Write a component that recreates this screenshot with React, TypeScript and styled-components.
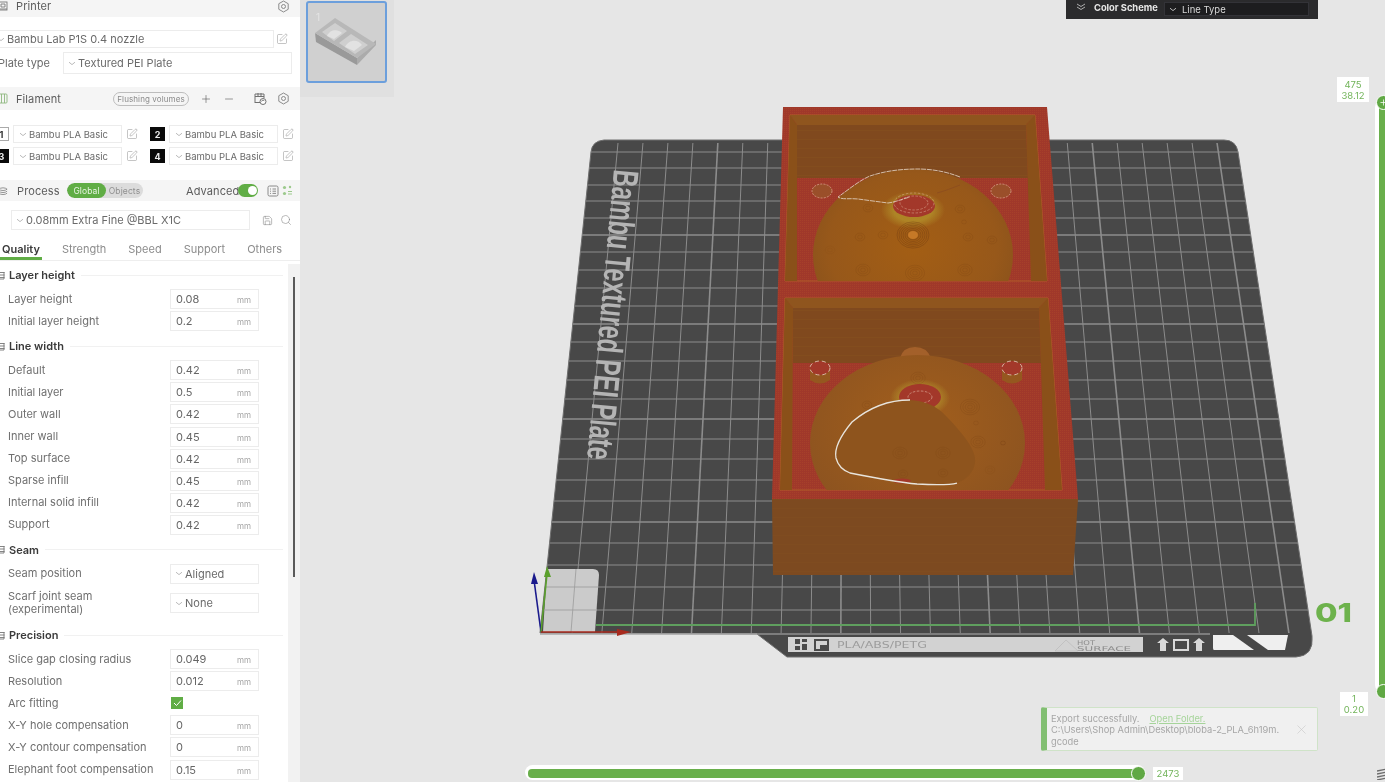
import React from "react";
import styled, { createGlobalStyle } from "styled-components";
import { Plus, Minus, SquarePen, Save, Search, X } from "lucide-react";

const Global = createGlobalStyle`
  html, body { margin: 0; padding: 0; background: #e6e6e6; overflow: hidden; }
  #root { width: 1385px; height: 782px; }
  * { box-sizing: border-box; }
`;

const Page = styled.div`
  width: 1385px; height: 782px; display: flex; overflow: hidden;
  font-family: Inter, "Noto Sans", "Liberation Sans", sans-serif;
  filter: blur(0.4px);
`;
const Sidebar = styled.aside`
  width: 300px; height: 782px; flex: none; background: #fff; display: flex; flex-direction: column; overflow: hidden;
`;
const PanelHeader = styled.div<{ $h: number; $pb?: number; $mt?: number }>`
  height: ${p => p.$h}px; padding-bottom: ${p => p.$pb ?? 0}px; margin-top: ${p => p.$mt ?? 0}px; flex: none; background: #f5f5f5;
  display: flex; align-items: center; padding-left: 0; padding-right: 10px;
  font-size: 11px; color: #5c5c5c; letter-spacing: 0.1px;
`;
const HeaderIcon = styled.span`
  width: 10px; margin-left: -2px; margin-right: 8px; display: inline-flex; flex: none; color: #777;
`;
const HeaderTitle = styled.span`
  flex: 1; white-space: nowrap;
`;
const ProcessTitle = styled.span`
  width: 51px; flex: none; white-space: nowrap; padding-left: 1px;
`;
const IconSlot = styled.span<{ $ml?: number; $c?: string }>`
  display: inline-flex; flex: none; margin-left: ${p => p.$ml ?? 0}px; color: ${p => p.$c ?? "#777"};
`;
const ComboBox = styled.div<{ $h: number; $w?: number; $fs?: number; $pl?: number }>`
  height: ${p => p.$h}px; ${p => (p.$w ? `width:${p.$w}px;` : "flex:1; min-width:0;")}
  border: 1px solid #ececec; background: #fff; display: flex; align-items: center;
  padding-left: ${p => p.$pl ?? 4}px; gap: 2px;
  font-size: ${p => p.$fs ?? 11}px; color: #6a6a6a; white-space: nowrap; overflow: hidden;
`;
const PrinterRow = styled.div`
  display: flex; align-items: center; margin: 13px 0 0 -6px; padding-right: 12px; height: 18px; gap: 2px;
`;
const PlateRow = styled.div`
  display: flex; align-items: center; height: 22px; margin: 4px 8px 0 -2px;
`;
const PlateLabel = styled.span`
  width: 65px; flex: none; font-size: 11px; color: #6a6a6a;
`;
const FilamentGrid = styled.div`
  display: grid; grid-template-columns: 144px 144px; column-gap: 12px; row-gap: 4px; margin: 15px 0 15px -6px;
`;
const FilamentCell = styled.div`
  display: flex; align-items: center; height: 18px;
`;
const Badge = styled.span<{ $dark?: boolean }>`
  width: 15px; height: 14px; flex: none; margin-right: 4px; display: flex; align-items: center; justify-content: center;
  font-size: 9px; font-weight: 700;
  background: ${p => (p.$dark ? "#0a0a0a" : "#fff")}; color: ${p => (p.$dark ? "#eee" : "#333")};
  border: 1px solid ${p => (p.$dark ? "#0a0a0a" : "#aaa")};
`;
const FlushPill = styled.span`
  width: 76px; height: 14px; margin-left: auto; border: 1px solid #bdbdbd; border-radius: 7px; display: flex;
  align-items: center; justify-content: center; font-size: 8px; color: #8a8a8a; white-space: nowrap;
`;
const Segmented = styled.div`
  width: 76px; height: 15px; background: #dcdcdc; border-radius: 8px; display: flex; flex: none;
  font-size: 8.5px; overflow: hidden;
`;
const SegmentOn = styled.span`
  width: 39px; background: #60ad45; color: #e9f4e4; border-radius: 8px; display: flex; align-items: center; justify-content: center;
`;
const SegmentOff = styled.span`
  flex: 1; color: #909090; display: flex; align-items: center; justify-content: center;
`;
const Advanced = styled.span`
  margin-left: 43px; width: 52px; flex: none; font-size: 11px; color: #5c5c5c; white-space: nowrap;
`;
const Switch = styled.span`
  width: 20px; height: 13px; border-radius: 7px; background: #60ad45; display: flex; justify-content: flex-end;
  align-items: center; padding-right: 1px; flex: none;
  &::after { content: ""; width: 9px; height: 9px; border-radius: 50%; background: #fff; }
`;
const PresetRow = styled.div`
  display: flex; align-items: center; height: 20px; margin: 9px 8px 0 11px; 
`;
const Tabs = styled.nav`
  height: 21px; margin-top: 10px; padding-left: 2px; display: flex; gap: 22px; flex: none; border-bottom: 1px solid #eeeeee;
  font-size: 11px; color: #8c8c8c; position: relative;
`;
const Tab = styled.span<{ $on?: boolean }>`
  line-height: 18px; white-space: nowrap; position: relative;
  ${p => p.$on ? `color:#3a3a3a;font-weight:600;&::after{content:"";position:absolute;left:-2px;right:-2px;top:17px;height:3px;background:#60ad45;}` : ""}
`;
const FormWrap = styled.div`
  flex: 1; display: flex; min-height: 0;
`;
const Form = styled.div`
  width: 288px; flex: none; padding-right: 5px;
`;
const Track = styled.div`
  flex: 1; background: #f2f2f2; margin-top: 3px; padding: 13px 0 0 5px;
`;
const Thumb = styled.div`
  width: 1.5px; height: 300px; background: #5a5a5a;
`;
const Section = styled.div`
  height: 26px; margin-top: 1px; display: flex; align-items: center; font-size: 11px; font-weight: 600; color: #3a3a3a;
  &::after { content: ""; flex: 1; height: 1px; background: #f1f1f1; margin-left: 6px; }
`;
const SectionIcon = styled.span`
  width: 8px; margin-left: -3px; margin-right: 4px; display: inline-flex; flex: none; color: #777;
`;
const Row = styled.div<{ $tall?: boolean }>`
  height: ${p => (p.$tall ? 36 : 22.1)}px; display: flex; align-items: center; padding-left: 8px;
`;
const Label = styled.span`
  width: 162px; flex: none; font-size: 11px; line-height: 13px; color: #6f6f6f;
`;
const Field = styled.span`
  width: 89px; height: 20px; border: 1px solid #ececec; display: flex; align-items: center; padding: 0 7px 0 5px;
  font-size: 11px; color: #666;
`;
const Unit = styled.span`
  margin-left: auto; font-size: 8px; color: #a5a5a5; padding-top: 2px;
`;
const Check = styled.span`
  width: 12px; height: 12px; background: #60ad45; display: flex; align-items: center; justify-content: center; margin-left: 1px;
`;

const Viewport = styled.main`
  flex: 1; position: relative; background: #e6e6e6; overflow: hidden;
`;
const Scene = styled.svg`
  position: absolute; left: 0; top: 0; width: 1085px; height: 782px;
`;
const ThumbDock = styled.div`
  position: absolute; left: 0; top: 0; width: 94px; height: 97px; background: #e0e0e0; padding: 1px 0 0 6px;
`;
const ThumbCard = styled.div`
  width: 81px; height: 82px; background: #d0d0d0; border: 2px solid #6c9fdc; border-radius: 3px; overflow: hidden;
`;
const SchemeBar = styled.div`
  position: absolute; left: 766px; top: 0; width: 252px; height: 19px; background: #2b2b2d; display: flex; align-items: flex-start;
  padding: 2px 9px 0 10px; font-size: 9.3px; color: #e8e8e8;
`;
const SchemeTitle = styled.span`
  font-weight: 700; margin-left: 8px; width: 70px; line-height: 11px; white-space: nowrap;
`;
const SchemeSelect = styled.span`
  flex: 1; height: 14px; background: #1d1d1f; border: 1px solid #333338; display: flex; align-items: center; gap: 5px; padding-left: 4px;
  color: #d8d8d8; font-size: 9.5px;
`;
const VBar = styled.div`
  position: absolute; left: 1075px; top: 100px; width: 14px; height: 592px; background: #fff; border-radius: 7px; padding: 4px 0 4px 4px;
`;
const VBarFill = styled.div`
  width: 10px; height: 100%; background: #69af4b;
`;
const Knob = styled.span<{ $x: number; $y: number }>`
  position: absolute; left: ${p => p.$x}px; top: ${p => p.$y}px; width: 15px; height: 15px; border-radius: 50%;
  background: #60a844; border: 1px solid #fff; color: #fff; display: flex; align-items: center; justify-content: center;
`;
const ValueTag = styled.div<{ $x: number; $y: number; $w: number; $h: number }>`
  position: absolute; left: ${p => p.$x}px; top: ${p => p.$y}px; width: ${p => p.$w}px; height: ${p => p.$h}px;
  background: #fff; color: #72b45a; font-size: 9.5px; line-height: 11px; text-align: center; display: flex; flex-direction: column; justify-content: center;
`;
const HBar = styled.div`
  position: absolute; left: 225px; top: 765px; width: 620px; height: 15px; background: #fff; border-radius: 8px; padding: 4px 6px 2px 3px;
`;
const HBarFill = styled.div`
  height: 9px; background: #69af4b; border-radius: 4px;
`;
const Toast = styled.div`
  position: absolute; left: 741px; top: 707px; width: 277px; height: 44px; background: #f0f0f0; border: 1px solid #cfe3c8; border-left: 6px solid #82bf72;
  border-radius: 2px; padding: 5px 0 0 4px; font-size: 9.3px; line-height: 11.3px; color: #a6a6a6;
`;
const ToastLine = styled.div`
  white-space: nowrap;
`;
const ToastLink = styled.span`
  color: #a6d49a; text-decoration: underline; margin-left: 10px;
`;
const ToastClose = styled.span`
  position: absolute; right: 8px; top: 14px; display: flex; color: #c8c8c8;
`;
const CornerIcon = styled.span`
  position: absolute; left: 1077px; top: 768px; display: flex; color: #6d6d6d;
`;

const Chevron = ({ c = "#a8a8a8" }: { c?: string }) => (
  <svg width="8" height="5" viewBox="0 0 8 5" fill="none" style={{ flex: "none" }}><path d="M1 1.2 L4 3.6 L7 1.2" stroke={c} strokeWidth="0.8" /></svg>
);
const Gear = () => (
  <svg width="13" height="13" viewBox="0 0 13 13" fill="none" stroke="#808080" strokeWidth="0.9"><path d="M6.5 1 L11.2 3.7 V9.3 L6.5 12 L1.8 9.3 V3.7 Z" strokeLinejoin="round" /><circle cx="6.5" cy="6.5" r="2" /></svg>
);
const Edit = () => <SquarePen size={12} strokeWidth={1} color="#8a8a8a" />;
const PrinterIco = () => (
  <svg width="10" height="10" viewBox="0 0 10 10" fill="none" stroke="#7a7a7a" strokeWidth="0.9"><rect x="1" y="1" width="8" height="8" /><path d="M3 3h4v3H3z M1 8h8" /></svg>
);
const SpoolIco = () => (
  <svg width="10" height="11" viewBox="0 0 10 11" fill="none" stroke="#8fb87f" strokeWidth="0.9"><rect x="1" y="1" width="8" height="9" rx="1" /><path d="M3.5 1v9 M6.5 1v9" /></svg>
);
const LayersIco = () => (
  <svg width="11" height="10" viewBox="0 0 11 10" fill="none" stroke="#808080" strokeWidth="0.9"><path d="M1 3c2-2 7-2 9 0c-2 2-7 2-9 0z M1 5.2c2 2 7 2 9 0 M1 7.4c2 2 7 2 9 0" /></svg>
);
const SyncIco = () => (
  <svg width="14" height="13" viewBox="0 0 14 13" fill="none" stroke="#707070" strokeWidth="1"><path d="M2 11V2h9v4 M2 4.5h9 M5 1v3 M8 1v3 M2 10.5h5" /><circle cx="10" cy="9.5" r="3" fill="#fff" /><path d="M8.6 9.5a1.4 1.4 0 0 1 2.7-.4" /></svg>
);
const SecIco = () => (
  <svg width="8" height="9" viewBox="0 0 8 9" fill="none" stroke="#777" strokeWidth="0.9"><path d="M0.5 1.5h7 M0.5 4h7 M0.5 6.5h7 M1 1v7h6V1" /></svg>
);

const Combo = ({ text, h = 18, w, pl, fs }: { text: string; h?: number; w?: number; pl?: number; fs?: number }) => (
  <ComboBox $h={h} $w={w} $pl={pl} $fs={fs}><Chevron />{text}</ComboBox>
);
const Num = ({ label, v }: { label: string; v: string }) => (
  <Row><Label>{label}</Label><Field>{v}<Unit>mm</Unit></Field></Row>
);
const Sec = ({ t }: { t: string }) => <Section><SectionIcon><SecIco /></SectionIcon>{t}</Section>;
const Fil = ({ n, dark }: { n: number; dark?: boolean }) => (
  <FilamentCell>
    <Badge $dark={dark}>{n}</Badge>
    <Combo text="Bambu PLA Basic" fs={9.5} pl={5} />
    <IconSlot $ml={4}><Edit /></IconSlot>
  </FilamentCell>
);

const hYs = [152,168,185,201,218,235,252,270,288,306,324,342,361,380,399,419,439,459,480,501,522,543,565,587,610];

const Rings = ({ cx, cy, r, c = "#6e3a10", op = 0.34, gap = 2.4, dot }: { cx: number; cy: number; r: number; c?: string; op?: number; gap?: number; dot?: boolean }) => {
  const list: number[] = [];
  for (let i = gap; i <= r; i += gap) list.push(i);
  return (
    <g fill="none" stroke={c} strokeWidth="0.5" opacity={op}>
      {list.map(q => <ellipse key={q} cx={cx} cy={cy} rx={q} ry={q * 0.82} />)}
      {dot && <ellipse cx={cx} cy={cy} rx={5} ry={4} fill="#d2832e" stroke="none" />}
    </g>
  );
};

const WallPattern = ({ id, base, line }: { id: string; base: string; line: string }) => (
  <pattern id={id} width="6" height="9" patternUnits="userSpaceOnUse">
    <rect width="6" height="9" fill={base} />
    <path d="M0 4.5H6" stroke={line} strokeWidth="0.6" />
  </pattern>
);

const Scene3D = () => (
  <Scene viewBox="300 0 1085 782">
    <defs>
      <clipPath id="bedClip"><path d="M540 633 L591 152 Q592 141 604 140 L1224 140 Q1236 140 1238 152 L1312 636 L1312 634 L540 634 Z" /></clipPath>
      <clipPath id="c1"><rect x="786" y="120" width="260" height="161" /></clipPath>
      <clipPath id="c2"><rect x="782" y="300" width="280" height="190" /></clipPath>
      <clipPath id="blob2"><path d="M942 412 C930 402 915 399 900 400 C880 402 862 410 852 422 C842 434 834 448 836 458 C838 466 842 470 850 473 C870 477 895 482 917 484 C935 485 950 485 957 483 C970 478 976 468 975 458 C973 445 958 428 942 412Z" /></clipPath>
      <radialGradient id="sph1" cx="0.5" cy="0.45" r="0.6">
        <stop offset="0" stopColor="#a35e14" /><stop offset="0.7" stopColor="#97581a" /><stop offset="1" stopColor="#87511c" />
      </radialGradient>
      <radialGradient id="sph2" cx="0.5" cy="0.4" r="0.6">
        <stop offset="0" stopColor="#a35f1c" /><stop offset="1" stopColor="#8c5320" />
      </radialGradient>
      <radialGradient id="glow"><stop offset="0.6" stopColor="#b9a030" /><stop offset="1" stopColor="#b9a030" stopOpacity="0" /></radialGradient>
      <pattern id="red" width="2" height="2" patternUnits="userSpaceOnUse">
        <rect width="2" height="2" fill="#a0382a" /><rect width="1" height="1" fill="#a6402a" />
      </pattern>
      <WallPattern id="front" base="#7d4a20" line="#814d20" />
      <WallPattern id="back" base="#80491e" line="#84501f" />
    </defs>

    <path d="M540 633 L591 152 Q592 141 604 140 L1224 140 Q1236 140 1238 152 L1312 636 Q1314 656 1296 657 L787 657 L757 634 Z" fill="#484848" stroke="#6e6e6e" strokeWidth="1" />
    <g clipPath="url(#bedClip)" stroke="#8c8c8c">
      {hYs.map((y, i) => <line key={y} x1="530" x2="1320" y1={y} y2={y} strokeWidth={i % 5 === 0 && i > 0 ? 1.6 : 1} />)}
      {Array.from({ length: 25 }).map((_, k) => (
        <line key={k} x1={618 + 24.96 * k} y1="143" x2={572 + 29.87 * k} y2="633" strokeWidth={k % 5 === 4 ? 1.6 : 1} />
      ))}
    </g>
    <line x1="540" y1="634" x2="757" y2="634" stroke="#a8a8a8" strokeWidth="1.5" />
    <line x1="757" y1="634" x2="1210" y2="634" stroke="#8f8f8f" strokeWidth="1.5" />

    <text transform="translate(614 169) rotate(95.3)" fontFamily="'Liberation Sans', sans-serif" fontWeight="700" fontSize="36" fill="#b4b4b4" textLength="291" lengthAdjust="spacingAndGlyphs">Bambu Textured PEI Plate</text>

    <path d="M547 569 H593 Q599 569 599 575 L595 632 H543 Z" fill="#cbcbcb" />
    <g stroke="#9a9a9a" strokeWidth="0.8"><path d="M546 587 H598 M544 610 H596 M576 569 L571 632" /></g>

    <path d="M596 625 H1255 V603" fill="none" stroke="#5f9f5e" strokeWidth="1.8" />

    <path d="M541 632 L534 580" stroke="#1a1a8c" strokeWidth="1.6" fill="none" />
    <path d="M534 572 L538 584 L531 584 Z" fill="#1a1a8c" />
    <path d="M541 632 L547 574" stroke="#5aa02c" strokeWidth="1.6" fill="none" />
    <path d="M547 566 L551 577 L544 577 Z" fill="#5aa02c" />
    <path d="M541 632 H620" stroke="#a82a1e" strokeWidth="1.6" fill="none" />
    <path d="M631 632 L617 636 L617 629 Z" fill="#a82a1e" />

    {/* bed labels */}
    <rect x="788" y="637" width="355" height="15" fill="#d2d2d2" />
    <g fill="#4a4a4a">
      <path d="M795 639h5v5h-5z M802 639h5v3h-5z M795 646h5v4h-5z M802 644h5v6h-5z" />
      <path d="M814 639h15v12h-15z M816 641v8h4v-4h7v-4z" fillRule="evenodd" />
    </g>
    <text x="837" y="648" fontFamily="'DejaVu Sans', sans-serif" fontSize="9.5" fill="#9c9c9c" textLength="90" lengthAdjust="spacingAndGlyphs">PLA/ABS/PETG</text>
    <path d="M1055 651 L1066 640 L1078 651 Z" fill="none" stroke="#bcbcbc" strokeWidth="0.8" />
    <text x="1077" y="645" fontFamily="'DejaVu Sans', sans-serif" fontSize="6.5" fill="#8e8e8e" textLength="18" lengthAdjust="spacingAndGlyphs">HOT</text>
    <text x="1077" y="651" fontFamily="'DejaVu Sans', sans-serif" fontSize="6.5" fill="#8e8e8e" textLength="54" lengthAdjust="spacingAndGlyphs">SURFACE</text>
    <g fill="#d8d8d8">
      <path d="M1163 638 L1169 643 H1166 V651 H1160 V643 H1157 Z" />
      <path d="M1173 639 H1189 V651 H1173 Z M1175 641 V649 H1187 V641 Z" fillRule="evenodd" />
      <path d="M1199 638 L1205 643 H1202 V651 H1196 V643 H1193 Z" />
      <path d="M1213 635 H1233 L1254 650 H1214 Q1213 650 1213 648 Z" fill="#efefef" />
      <path d="M1247 635 H1288 L1285 650 H1268 Z" fill="#efefef" />
    </g>
    <text x="1315" y="622" fontFamily="Inter, 'Liberation Sans', sans-serif" fontWeight="800" fontSize="26" fill="#6db24c" textLength="37" lengthAdjust="spacingAndGlyphs">01</text>

    {/* printed box */}
    <path d="M783 107 H1047 L1078 499 H772 Z" fill="url(#red)" />
    <path d="M772 499 H1078 L1073 575 H773 Z" fill="url(#front)" />

    {/* cavity 1 */}
    <path d="M790 115 H1035 L1047 281 H785 Z" fill="url(#red)" stroke="#b5662a" strokeWidth="0.8" />
    <path d="M797 125 H1026 L1028 178 H797 Z" fill="url(#back)" />
    <path d="M790 115 H1035 L1026 125 H797 Z" fill="#8f551e" />
    <path d="M790 115 L785 281 H797 L797 125 Z" fill="#8a5019" />
    <path d="M1035 115 L1047 281 H1031 L1026 125 Z" fill="#8a5019" />
    <g fill="none" stroke="#d9a28c" strokeWidth="0.8" strokeDasharray="2 1.2">
      <ellipse cx="822" cy="191" rx="10" ry="7" fill="#9a4f2a" />
      <ellipse cx="1001" cy="191" rx="10" ry="7" fill="#9a4f2a" />
    </g>
    <g clipPath="url(#c1)">
      <ellipse cx="913" cy="255" rx="100" ry="86" fill="url(#sph1)" />
      <ellipse cx="913" cy="210" rx="32" ry="19" fill="url(#glow)" opacity="0.6" />
      <Rings cx={913} cy={235} r={16} op={0.75} gap={2} dot />
      <Rings cx={883} cy={235} r={7} />
      <Rings cx={860} cy={237} r={7} />
      <Rings cx={968} cy={237} r={7} />
      <Rings cx={960} cy={209} r={7} />
      <Rings cx={868} cy={208} r={7} />
      <Rings cx={863} cy={270} r={9} />
      <Rings cx={915} cy={273} r={10} />
      <Rings cx={965} cy={270} r={9} />
      <Rings cx={964} cy={222} r={4} />
      <Rings cx={992} cy={240} r={5} />
      <Rings cx={830} cy={250} r={5} op={0.15} />
      <ellipse cx="914" cy="206" rx="21" ry="11" fill="#a3382a" />
      <g fill="none" stroke="#e2b9a0" strokeWidth="0.6" strokeDasharray="2.5 1.5" opacity="0.8">
        <ellipse cx="914" cy="203" rx="14" ry="7" />
        <ellipse cx="914" cy="203" rx="20" ry="10" />
      </g>
    </g>
    <path d="M960 177 C945 171 930 169 918 169 C900 169 885 171 870 176 C860 180 848 190 838 197 C842 200 850 198 858 199 L888 203 C896 202 902 199 910 197" fill="none" stroke="#dccab8" strokeWidth="0.9" strokeDasharray="5 0.8" />
    <path d="M960 185 C952 188 945 191 937 193" fill="none" stroke="#8a4a20" strokeWidth="0.7" />

    {/* cavity 2 */}
    <path d="M785 298 H1048 L1062 490 H780 Z" fill="url(#red)" stroke="#b5662a" strokeWidth="0.8" />
    <path d="M793 308 H1039 L1041 363 H793 Z" fill="url(#back)" />
    <path d="M785 298 H1048 L1039 308 H793 Z" fill="#8f551e" />
    <path d="M785 298 L780 490 H792 L793 308 Z" fill="#8a5019" />
    <path d="M1048 298 L1062 490 H1045 L1039 308 Z" fill="#8a5019" />
    <g>
      <path d="M810 367 V380 Q820 387 830 380 V367 Z" fill="#95571f" />
      <ellipse cx="820" cy="368" rx="10" ry="7" fill="#a3382a" stroke="#e5d3c2" strokeWidth="0.8" strokeDasharray="4 3" />
      <path d="M1002 368 V380 Q1012 387 1022 380 V368 Z" fill="#95571f" />
      <ellipse cx="1012" cy="368" rx="10" ry="7" fill="#a3382a" stroke="#e5d3c2" strokeWidth="0.8" strokeDasharray="4 3" />
    </g>
    <path d="M900 358 Q903 347 915 347 Q927 347 931 358 Z" fill="#a3602a" />
    <g clipPath="url(#c2)">
      <ellipse cx="917.5" cy="443" rx="107.5" ry="88" fill="url(#sph2)" />
      <ellipse cx="920" cy="398" rx="30" ry="19" fill="url(#glow)" opacity="0.6" />
      <ellipse cx="920" cy="397" rx="21" ry="13" fill="#a3382a" />
      <g fill="none" stroke="#e0b7a5" strokeWidth="0.6" strokeDasharray="2.5 1.5">
        <ellipse cx="920" cy="397" rx="12" ry="6" />
      </g>
      <Rings cx={918} cy={378} r={9} />
      <Rings cx={970} cy={407} r={10} />
      <Rings cx={978} cy={442} r={9} />
      <Rings cx={1003} cy={443} r={4} op={0.6} />
      <Rings cx={976} cy={423} r={3} />
      <Rings cx={867} cy={405} r={7} />
      <Rings cx={990} cy={470} r={6} op={0.18} />
      <path d="M942 412 C930 402 915 399 900 400 C880 402 862 410 852 422 C842 434 834 448 836 458 C838 466 842 470 850 473 C870 477 895 482 917 484 C935 485 950 485 957 483 C970 478 976 468 975 458 C973 445 958 428 942 412Z" fill="#8e541d" />
      <g clipPath="url(#blob2)">
        <Rings cx={900} cy={453} r={9} op={0.24} />
        <Rings cx={943} cy={453} r={9} op={0.24} />
        <Rings cx={903} cy={474} r={6} op={0.24} />
        <Rings cx={943} cy={473} r={6} op={0.24} />
      </g>
      <ellipse cx="902" cy="481" rx="9" ry="2.5" fill="#a3382a" />
      <path d="M910 400 C893 400 872 405 852 422 C842 434 834 448 836 458 C838 466 842 470 850 473 C870 477 895 482 917 484 C935 485 950 485 957 483" fill="none" stroke="#e8e4dc" strokeWidth="1.3" />
    </g>
  </Scene>
);

const ThumbBox = () => (
  <svg width="77" height="78" viewBox="308 3 77 78">
    <path d="M316 42 L357 65 V58 L315 33 Z" fill="#9a9a9a" />
    <path d="M357 65 L376 45 V40 L357 58 Z" fill="#ababab" />
    <path d="M315 33 L335 18 L376 44 L357 58 Z" fill="#b8b8b8" />
    <path d="M322 32 L335 23 L347 31 L334 41 Z M339 43 L351 34 L368 45 L355 54 Z" fill="#cfcfcf" />
    <path d="M327 36 C330 29 338 29 342 33 L334 39 Z M345 47 C349 39 358 39 362 45 L354 51 Z" fill="#e2e2e2" />
    <text x="316" y="21" fontFamily="Inter, sans-serif" fontSize="10" fill="#e4e4e4">1</text>
  </svg>
);

export default function App() {
  return (
    <>
      <Global />
      <Page>
        <Sidebar>
          <PanelHeader $h={17} $pb={5}>
            <HeaderIcon><PrinterIco /></HeaderIcon>
            <HeaderTitle>Printer</HeaderTitle>
            <IconSlot><Gear /></IconSlot>
          </PanelHeader>
          <PrinterRow>
            <ComboBox $h={18} $pl={2} $fs={11}><Chevron />Bambu Lab P1S 0.4 nozzle</ComboBox>
            <IconSlot><Edit /></IconSlot>
          </PrinterRow>
          <PlateRow>
            <PlateLabel>Plate type</PlateLabel>
            <Combo h={22} text="Textured PEI Plate" />
          </PlateRow>
          <PanelHeader $h={23} $mt={13}>
            <HeaderIcon><SpoolIco /></HeaderIcon>
            <span>Filament</span>
            <FlushPill>Flushing volumes</FlushPill>
            <IconSlot $ml={11}><Plus size={12} strokeWidth={1.2} color="#555" /></IconSlot>
            <IconSlot $ml={11}><Minus size={12} strokeWidth={1.2} color="#555" /></IconSlot>
            <IconSlot $ml={18}><SyncIco /></IconSlot>
            <IconSlot $ml={10}><Gear /></IconSlot>
          </PanelHeader>
          <FilamentGrid>
            <Fil n={1} />
            <Fil n={2} dark />
            <Fil n={3} dark />
            <Fil n={4} dark />
          </FilamentGrid>
          <PanelHeader $h={21}>
            <HeaderIcon><LayersIco /></HeaderIcon>
            <ProcessTitle>Process</ProcessTitle>
            <Segmented><SegmentOn>Global</SegmentOn><SegmentOff>Objects</SegmentOff></Segmented>
            <Advanced>Advanced</Advanced>
            <Switch />
            <IconSlot $ml={9}>
              <svg width="12" height="12" viewBox="0 0 12 12" fill="none" stroke="#808080" strokeWidth="0.9"><rect x="1" y="1" width="10" height="10" rx="1.5" /><path d="M3 4h1 M5.5 4h3.5 M3 6.2h1 M5.5 6.2h3.5 M3 8.4h1 M5.5 8.4h3.5" /></svg>
            </IconSlot>
            <IconSlot $ml={3}>
              <svg width="11" height="11" viewBox="0 0 11 11" fill="#9cc98c"><circle cx="2.5" cy="2.5" r="1.6" /><circle cx="8" cy="2" r="1.2" /><circle cx="2.5" cy="8.5" r="1.6" /><path d="M6 6h4v1H6z M6 8.5h4v1H6z" /></svg>
            </IconSlot>
          </PanelHeader>
          <PresetRow>
            <ComboBox $h={20} $w={239}><Chevron />0.08mm Extra Fine @BBL X1C</ComboBox>
            <IconSlot $ml={12}><Save size={11} strokeWidth={1.1} color="#777" /></IconSlot>
            <IconSlot $ml={7}><Search size={12} strokeWidth={1} color="#777" /></IconSlot>
          </PresetRow>
          <Tabs>
            <Tab $on>Quality</Tab>
            <Tab>Strength</Tab>
            <Tab>Speed</Tab>
            <Tab>Support</Tab>
            <Tab>Others</Tab>
          </Tabs>
          <FormWrap>
            <Form>
              <Sec t="Layer height" />
              <Num label="Layer height" v="0.08" />
              <Num label="Initial layer height" v="0.2" />
              <Sec t="Line width" />
              <Num label="Default" v="0.42" />
              <Num label="Initial layer" v="0.5" />
              <Num label="Outer wall" v="0.42" />
              <Num label="Inner wall" v="0.45" />
              <Num label="Top surface" v="0.42" />
              <Num label="Sparse infill" v="0.45" />
              <Num label="Internal solid infill" v="0.42" />
              <Num label="Support" v="0.42" />
              <Sec t="Seam" />
              <Row><Label>Seam position</Label><Combo w={89} h={20} text="Aligned" /></Row>
              <Row $tall><Label>Scarf joint seam<br />(experimental)</Label><Combo w={89} h={20} text="None" /></Row>
              <Sec t="Precision" />
              <Num label="Slice gap closing radius" v="0.049" />
              <Num label="Resolution" v="0.012" />
              <Row><Label>Arc fitting</Label>
                <Check><svg width="9" height="8" viewBox="0 0 9 8" fill="none"><path d="M1 4 L3.5 6.5 L8 1.5" stroke="#fff" strokeWidth="1" /></svg></Check>
              </Row>
              <Num label="X-Y hole compensation" v="0" />
              <Num label="X-Y contour compensation" v="0" />
              <Num label="Elephant foot compensation" v="0.15" />
            </Form>
            <Track><Thumb /></Track>
          </FormWrap>
        </Sidebar>
        <Viewport>
          <Scene3D />
          <ThumbDock><ThumbCard><ThumbBox /></ThumbCard></ThumbDock>
          <SchemeBar>
            <svg width="10" height="10" viewBox="0 0 10 10" fill="none" stroke="#bbb" strokeWidth="0.9"><path d="M1 2 L5 4.5 L9 2 M1 5 L5 7.5 L9 5" /></svg>
            <SchemeTitle>Color Scheme</SchemeTitle>
            <SchemeSelect><Chevron c="#ddd" />Line Type</SchemeSelect>
          </SchemeBar>
          <ValueTag $x={1037} $y={77} $w={32} $h={25}><span>475</span><span>38.12</span></ValueTag>
          <VBar><VBarFill /></VBar>
          <Knob $x={1076} $y={95}><Plus size={9} strokeWidth={2} /></Knob>
          <Knob $x={1076} $y={684} />
          <ValueTag $x={1040} $y={692} $w={28} $h={24}><span>1</span><span>0.20</span></ValueTag>
          <HBar><HBarFill /></HBar>
          <Knob $x={831} $y={766} />
          <ValueTag $x={853} $y={767} $w={30} $h={13}>2473</ValueTag>
          <Toast>
            <ToastLine>Export successfully.<ToastLink>Open Folder.</ToastLink></ToastLine>
            <ToastLine>C:\Users\Shop Admin\Desktop\bloba-2_PLA_6h19m.</ToastLine>
            <ToastLine>gcode</ToastLine>
            <ToastClose><X size={15} strokeWidth={1} /></ToastClose>
          </Toast>
          <CornerIcon>
            <svg width="10" height="12" viewBox="0 0 10 12" fill="none" stroke="#6d6d6d" strokeWidth="1.3"><path d="M0 3 L10 1 M0 6 L10 4 M0 9 L10 7 M0 12 L10 10" /></svg>
          </CornerIcon>
        </Viewport>
      </Page>
    </>
  );
}
